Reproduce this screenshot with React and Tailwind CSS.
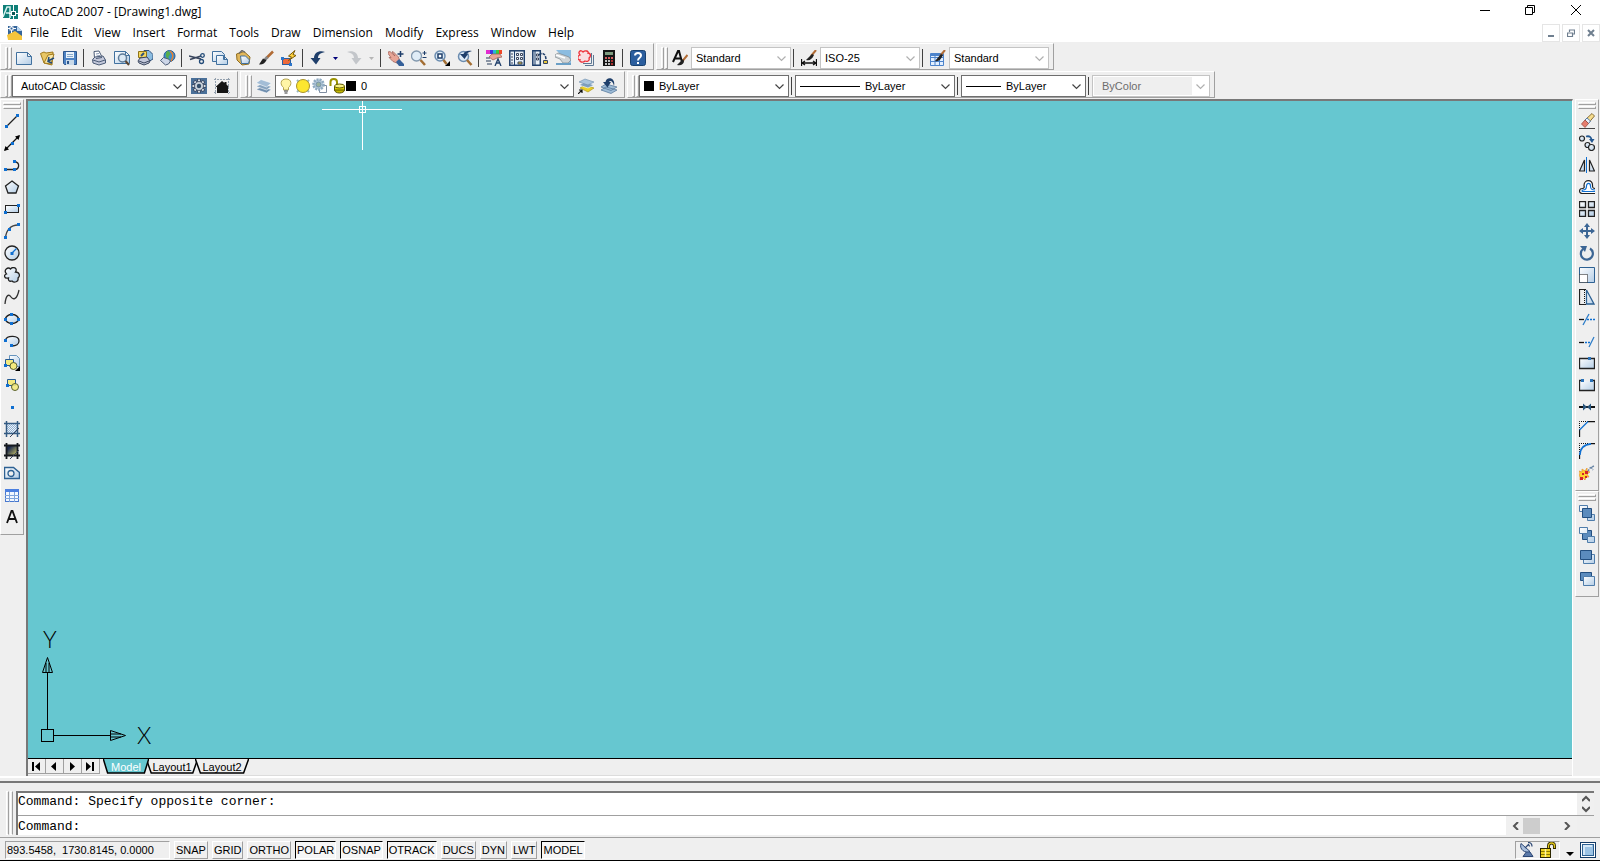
import clsx from "clsx";

const paper = "url(#paper)";
const navy = "#1f3f6b";

// 16x16 line art used by every toolbar
const glyphs = {
  app: (
    <>
      <rect x="0" y="1" width="15" height="14" fill="#0f7f78" />
      <path d="M0 13 4 3h3v11M3 9h4" fill="none" stroke="#d9f3f0" strokeWidth="1.500" />
      <path d="M10.500 1v6M10.500 12v4M6 9.500h3M13 9.500h3M0 14.500h7" stroke="#fff" />
      <rect x="8.500" y="7.500" width="4" height="4" fill="#0b5854" stroke="#fff" />
    </>
  ),
  dwg: (
    <>
      <path d="M1 1h9l5 5v9H1z" fill="#35659a" />
      <path d="M10 1v5h5" fill="#bcd7ef" />
      <path d="M0 10l8-4 7 5v4H1z" fill="#f5c53c" />
      <path d="M4.500 0v8M1 3.500h8" stroke="#fff" />
      <rect x="3" y="2" width="3" height="3" fill="#35659a" stroke="#fff" />
    </>
  ),
  new: <path d="M.5 2.500h11l4 4v8H.5zM11.500 2.500v4h4" fill={paper} stroke="#41719f" />,
  open: (
    <>
      <path d="M1.500 3.500 5 2l2 1 7-1-1 13-8-2z" fill="#e9c765" stroke="#a17a1c" />
      <path d="M5 13 9 5l6-1-3 10z" fill="#f8e6a5" stroke="#a17a1c" />
      <path d="M15 8 9 11m1-4-1 4.500 4 1.500" fill="none" stroke="#234b78" strokeWidth="1.500" />
    </>
  ),
  save: (
    <>
      <path d="M1.500 1.500h13v13h-12l-1-1z" fill="#4d82c3" stroke="#2d568c" />
      <rect x="4" y="2" width="8" height="6" fill="#e9f2fa" />
      <path d="M5 4.500h6M5 6.500h6" stroke="#88aacb" />
      <rect x="4" y="10" width="8" height="5" fill="#c9d9e8" />
      <rect x="5" y="11" width="2" height="3" fill="#2d568c" />
    </>
  ),
  print: (
    <>
      <path d="M3.500 8 3 1.500l5-.5 3 6" fill="#fff" stroke="#4b5b76" />
      <path d="m5 4 3-.5M5.500 6 9 5.500" stroke="#8898b4" />
      <path d="M1.500 9.500 4 7l8-1 2.500 4v3L8 15l-6-2z" fill="#c3c8da" stroke="#4b5b76" />
      <path d="m2 10 6 2 6-2M5 8.500l6-1" fill="none" stroke="#4b5b76" />
    </>
  ),
  preview: (
    <>
      <path d="M.5 1.500h11l4 4v8H.5zM11.500 1.500v4h4" fill={paper} stroke="#41719f" />
      <circle cx="8.500" cy="8" r="4" fill="#dbe9f5" stroke="#5e7c99" strokeWidth="1.500" />
      <path d="m11.500 11 3.500 4" stroke="#5c4530" strokeWidth="2" />
    </>
  ),
  publish: (
    <>
      <path d="M7 .5h5l4 4V9l-5 3z" fill="#8cbce0" stroke="#31527c" />
      <path d="M1.500 1.500h8v6h-8z" fill="#f5d75b" stroke="#8e7318" />
      <path d="m4 6 3-3" stroke="#31527c" strokeWidth="2" />
      <path d="M1 11 3 8l7-1 3 4-1 2-5 2-5-2z" fill="#c3c8da" stroke="#39455d" />
      <path d="m2 11 5 2 5-2" fill="none" stroke="#39455d" />
    </>
  ),
  web: (
    <>
      <circle cx="9.500" cy="6" r="5.500" fill="#3c8fd0" stroke="#265c95" />
      <path d="M7 1c3 0 4 3 2 5s2 3 0 5C7 8 4 6 7 1z" fill="#59ad4a" />
      <path d="M10 1c3 2 4 6 1 10" fill="none" stroke="#e7802e" strokeWidth="1.500" />
      <path d="m.5 10.500 3-3 5 1.500 2 2-2 3-3 1z" fill="#cdd6e8" stroke="#4b5b76" />
    </>
  ),
  cut: (
    <>
      <path d="M0 6 12 9M1 9.500 12 6" stroke="#39455d" strokeWidth="1.500" />
      <circle cx="13.500" cy="5.500" r="1.800" fill="none" stroke="#234b78" strokeWidth="1.300" />
      <circle cx="12.500" cy="11.500" r="2" fill="none" stroke="#234b78" strokeWidth="1.300" />
    </>
  ),
  copy: (
    <>
      <path d="M.5 1.500h9l3 3v7H.5z" fill={paper} stroke="#41719f" />
      <path d="M4.500 5.500h7l4 4v5h-11zM11.500 5.500v4h4" fill={paper} stroke="#41719f" />
    </>
  ),
  paste: (
    <>
      <path d="M1.500 4 9 1.500l6 5.500-1 7-7 1-5-5z" fill="#e1b75b" stroke="#8f6d20" />
      <path d="M4 3.500 7 .5l3 2" fill="none" stroke="#6d6d6d" strokeWidth="1.500" />
      <path d="m5.500 6 5 0 4 4-1 3.500-7 0z" fill={paper} stroke="#41719f" />
    </>
  ),
  brush: (
    <>
      <path d="M15 1.500 8.500 8" stroke="#b16b34" strokeWidth="2.500" />
      <path d="M9.500 7 7 9.500" stroke="#888" strokeWidth="3" />
      <path d="M8.500 10 5 8.500 1 14.500c3 .5 6-1 7.500-4.500z" fill="#222" />
    </>
  ),
  blockEdit: (
    <>
      <rect x="1.500" y="8.500" width="8" height="6" fill="#ee6a3b" stroke="#2b5fa0" />
      <path d="M0 7h3v3H0zM8 13h3v3H8z" fill="#2b74c9" />
      <path d="M14 .5 7.500 6l3 1L7.500 10.500 15 5.500l-3-1z" fill="#ffd23d" stroke="#7a5a08" />
    </>
  ),
  undo: (
    <path d="M15 2C9 0 4 3 4 8H.5L6 14.500 10.500 8H8c0-3 2-5 7-6z" fill={navy} />
  ),
  redo: <path d="M1 2c6-2 11 1 11 6h3.500L10 14.500 5.500 8H8c0-3-2-5-7-6z" fill="#c3c6ca" />,
  pan: (
    <>
      <path d="M0 2l2-.5L7 6 4 2l1-.5 5 5 2 4-2 3-5-2-4-4 2 0-3-4z" fill="#e8a597" stroke="#9a5a52" strokeWidth=".7" />
      <path d="m8 12 3-3 5 5v2h-5z" fill="#36619a" />
      <path d="M12.500 1v6M9.500 4h6" stroke={navy} strokeWidth="1.500" />
    </>
  ),
  zoom: (
    <>
      <circle cx="5.500" cy="6" r="5" fill="#dfecf7" stroke="#8298ae" strokeWidth="1.300" />
      <path d="m9.500 10 4.500 5" stroke="#a36e33" strokeWidth="2.500" />
      <path d="M13.500 1v4M11.500 3h4M11.500 7.500h4" stroke={navy} />
    </>
  ),
  zoomWindow: (
    <>
      <circle cx="6" cy="6" r="5" fill="#dfecf7" stroke="#6c8db0" strokeWidth="1.500" />
      <rect x="4" y="4" width="4" height="4" fill="#fff" stroke={navy} strokeWidth="1.500" />
      <path d="m9.500 10 3 4" stroke="#a36e33" strokeWidth="2.500" />
      <path d="M16 11v5h-5z" />
    </>
  ),
  zoomPrev: (
    <>
      <circle cx="6.500" cy="6.500" r="5" fill="#dfecf7" stroke="#6c8db0" strokeWidth="1.500" />
      <path d="m10 10 4.500 5" stroke="#a36e33" strokeWidth="2.500" />
      <path d="M15 1C10 0 7 2 6.500 4H3l4.500 5L11 4H9.500C10 3 12 2 15 1z" fill={navy} />
    </>
  ),
  props: (
    <>
      <path d="M0 0h4v4H0z" fill="#e22bd0" />
      <path d="M4 0h3v4H4z" fill="#4037e0" />
      <path d="M7 0h3v4H7z" fill="#28b7d8" />
      <path d="M10 0h3v4h-3z" fill="#3ccc3c" />
      <path d="M13 0h3v4h-3z" fill="#ee4728" />
      <path d="m3 7 3-3 8 0 2 3-5 1-4 2z" fill="#e8a597" stroke="#94564e" strokeWidth=".7" />
      <path d="M0 8h4m-4 3h5m-4 3h5" stroke="#68778c" strokeWidth="1.500" />
      <path d="m9 16 3-7 3 7m-5-3h4" fill="none" stroke={navy} strokeWidth="1.300" />
    </>
  ),
  center: (
    <>
      <rect x=".8" y=".8" width="14.500" height="14.500" fill="#e8f0f7" stroke={navy} strokeWidth="1.500" />
      <path d="M5.500 1v14" stroke={navy} />
      <path d="M2 4h2M2 7h2M2 10h2M2 13h2" stroke="#39455d" />
      <path d="M7.500 3.500h2v2h-2zM11.500 3.500h2v2h-2zM7.500 7.500h2v2h-2zM11.500 7.500h2v2h-2z" fill="#fff" stroke="#39455d" />
      <path d="M9 12h4v2H9z" fill="#e6c63a" stroke="#39455d" />
    </>
  ),
  palettes: (
    <>
      <path d="M.8.8h7.500v14.500H.8z" fill="#e8f0f7" stroke={navy} strokeWidth="1.500" />
      <path d="M3 1v14" stroke={navy} />
      <path d="M4.500 4h2v2h-2zM4.500 8h2v2h-2z" fill="#fff" stroke="#39455d" />
      <path d="M7 5c4-4 7 0 7 5" fill="none" stroke={navy} strokeWidth="1.500" strokeDasharray="3 1" />
      <path d="M11.500 10.500h4v3h-4z" fill="#e6c63a" stroke="#39455d" />
    </>
  ),
  sheets: (
    <>
      <path d="M1 0h15v15z" fill="#8bbce0" />
      <path d="m0 5 3-2 11 4 2 3-3 3-5 0-3-4-5-2z" fill="#cfd4d7" stroke="#7c868c" strokeWidth=".7" />
      <path d="m1 5 9 3" stroke="#fff" strokeWidth="1.500" />
      <path d="M1 13h15v2H1z" fill="#6a9fc6" />
    </>
  ),
  markup: (
    <>
      <path d="M5 13.500h8.500V3M7 15.500h8.500V5" fill="none" stroke="#5d7691" />
      <rect x="2" y="2" width="10" height="10" fill="#f4e9ec" />
      <path d="M2 5C-1 2 3-1 5 2c2-2 6-1 5 1 3 0 3 4 1 5 1 3-2 4-4 3-2 2-6 1-5-1-3 0-3-4 0-5z" fill="#f8dfe2" stroke="#ee2f38" strokeWidth="1.300" />
    </>
  ),
  calc: (
    <>
      <rect x="2" y="0" width="12" height="16" fill="#161616" />
      <rect x="4" y="2" width="8" height="3" fill="#7f9c7f" />
      <path d="M4 8h2M7 8h2M10 8h2M4 11h2M7 11h2M4 14h2M7 14h2" stroke="#fff" strokeWidth="1.500" />
      <path d="M4 8h8M10 11h2M10 14h2" stroke="#dc3a3a" strokeWidth="1.500" strokeDasharray="2 1" />
    </>
  ),
  help: (
    <>
      <rect x=".5" y=".5" width="15" height="15" rx="2" fill="#2b5e9e" stroke="#17406f" />
      <path d="M5 5.500C5 2 11 2 11 5.500 11 8 8 7.500 8 10.500M8 12v2" fill="none" stroke="#fff" strokeWidth="2" />
    </>
  ),
  textStyle: (
    <>
      <path d="M1 12 6 1h1l3 11M3 8.500h6" fill="none" stroke="#111" strokeWidth="2" />
      <path d="m15.500 5-5 6" stroke="#b16b34" strokeWidth="2" />
      <path d="m11 9-6 6c4 1 7-1 7-4z" fill="#222" />
    </>
  ),
  dimStyle: (
    <>
      <path d="M.5 9v7M15.500 9v7M1 13h14M4 11l-3 2 3 2M12 11l3 2-3 2" fill="none" stroke="#111" strokeWidth="1.300" />
      <path d="m15 0-5 6" stroke="#b16b34" strokeWidth="2" />
      <path d="m11 4-6 6c4 1 6-1 8-5z" fill="#222" />
    </>
  ),
  tableStyle: (
    <>
      <path d="M.5 3.500h13v12H.5zM.5 7.500h13M.5 11.500h13M5 4v11M9.500 4v11" fill="#e2efff" stroke="#4c83cb" />
      <path d="M1 4h12v2H1z" fill="#4c83cb" />
      <path d="m15 0-5 6" stroke="#b16b34" strokeWidth="2" />
      <path d="m11 4-6 7c4 1 6-2 8-6z" fill="#222" />
    </>
  ),
  gear: (
    <>
      <path d="M0 0h16v16H0z" fill="#4a7099" />
      <path d="M8 1v14M1 8h14M3 3l10 10M13 3 3 13" stroke="#39455d" strokeWidth="3.600" />
      <path d="M8 1.500v13M1.500 8h13M3.500 3.500l9 9M12.500 3.500l-9 9" stroke="#d6dee6" strokeWidth="2" />
      <circle cx="8" cy="8" r="4.500" fill="#c9d2db" stroke="#39455d" strokeWidth=".8" />
      <circle cx="8" cy="8" r="2.200" fill="#344e6a" />
    </>
  ),
  home: (
    <>
      <path d="M1.500 0v16M14.500 0v16M0 1.500h16M0 14.500h16" stroke="#93a0ae" strokeDasharray="2 1" />
      <path d="M8 3 1.500 9H3v6h11V9h1L12.500 6.500V4h-2v1z" fill="#151515" />
    </>
  ),
  layers: (
    <>
      <path d="m0 11.500 5-2.500 10.500 2.500-5 3.500z" fill="#6f8eae" stroke="#fff" strokeWidth=".6" />
      <path d="m0 8.500 5-2.500 10.500 2.500-5 3.500z" fill="#86a3bf" stroke="#fff" strokeWidth=".6" />
      <path d="m0 5 5-3.500L15.500 5l-5 4z" fill="#a3bdd6" stroke="#fff" strokeWidth=".6" />
    </>
  ),
  layerCurrent: (
    <>
      <path d="m2 10 5-3 9 3-6 4z" fill="#e9cf28" stroke="#a58b0c" strokeWidth=".6" />
      <path d="m1 7 6-3 9 3-6 3z" fill="#7f9fbe" stroke="#fff" strokeWidth=".6" />
      <path d="m1 4 6-3 9 3-6 3z" fill="#a8c4dd" stroke="#6d8dac" strokeWidth=".6" />
      <path d="m0 16 4-4M1 12h3v3" fill="none" stroke="#111" strokeWidth="1.200" />
    </>
  ),
  layerPrev: (
    <>
      <path d="m0 12 5-3 11 3-6 3.500zM0 9l5-3 11 3-6 3.500z" fill="#9dbbd6" stroke="#4f7196" strokeWidth=".7" />
      <path d="M13 8c2-9-8-10-8.500-4H2l4.500 5.500L10 4H8c1-2 4-1 5 4z" fill={navy} />
    </>
  ),
  bulb: (
    <>
      <path d="M8 1c-6 0-6 6-2.500 8.500V12h5V9.500C14 7 14 1 8 1z" fill="#fff5a6" stroke="#b5a550" />
      <path d="M6 13h4M6.500 15h3" stroke="#777" strokeWidth="1.500" />
    </>
  ),
  sun: (
    <>
      <path d="M2 2l2 2M14 2l-2 2M2 14l2-2M14 14l-2-2" stroke="#9bb9bd" strokeWidth="2" />
      <circle cx="8" cy="8" r="6.500" fill="#fce62f" stroke="#a8922a" />
    </>
  ),
  freeze: (
    <>
      <path d="M7.500 7.500h7v7h-7z" fill="#fff" stroke="#7f8da0" />
      <circle cx="6.500" cy="6.500" r="5" fill="#b5cadb" stroke="#8eaac1" strokeDasharray="2 1" strokeWidth="2.500" />
      <circle cx="6.500" cy="6.500" r="2.500" fill="#9ab39f" stroke="#7493ad" />
    </>
  ),
  lock: (
    <>
      <path d="M1.500 8V4C1.500 0 8 0 8 4v3" fill="none" stroke="#9c9300" strokeWidth="2" />
      <ellipse cx="10.500" cy="12" rx="5" ry="3" fill="#c5b900" stroke="#5d5700" />
      <path d="M5.500 8v4h10V8" fill="#e1d500" stroke="#5d5700" />
      <ellipse cx="10.500" cy="8" rx="5" ry="2" fill="#f6f083" stroke="#5d5700" />
    </>
  ),
  line: (
    <>
      <path d="M2 14 14 2" stroke="#222" strokeWidth="1.300" />
      <path d="M1 12h3v3H1zM12 1h3v3h-3z" fill="#0f6fd1" />
    </>
  ),
  xline: (
    <>
      <path d="M1 15 15 1" stroke="#111" strokeWidth="1.300" />
      <path d="m0 16 1.500-5L5 14.500zM16 0l-1.500 5L11 1.500z" />
      <path d="M7 7h3v3H7z" fill="#0f6fd1" />
    </>
  ),
  pline: (
    <>
      <path d="M1 12.500h9.500M10.500 12.500c5 0 6-7 0-8" fill="none" stroke="#222" strokeWidth="1.300" />
      <path d="M0 11h3v3H0zM9 11h3v3H9zM9 3h3v3H9z" fill="#0f6fd1" />
    </>
  ),
  polygon: <path d="m8 2 6.500 5-2.500 7H4L1.500 7z" fill={paper} stroke="#222" strokeWidth="1.300" />,
  rect: (
    <>
      <rect x="1.500" y="4.500" width="13" height="7" fill={paper} stroke="#222" />
      <path d="M0 10h3v3H0zM13 3h3v3h-3z" fill="#0f6fd1" />
    </>
  ),
  arc: (
    <>
      <path d="M1.500 15C2 7 7 2 14 2" fill="none" stroke="#444" strokeWidth="1.300" />
      <path d="M0 13h3v3H0zM4 5h3v3H4zM13 0h3v3h-3z" fill="#0f6fd1" />
    </>
  ),
  circle: (
    <>
      <circle cx="8" cy="8" r="7" fill={paper} stroke="#222" strokeWidth="1.300" />
      <path d="m8 8 4.500-4.500" stroke="#0f6fd1" strokeWidth="1.300" />
      <path d="M6.500 7h3v3h-3z" fill="#0f6fd1" />
    </>
  ),
  cloud: (
    <path d="M2.500 7C-1 3 4-.500 6.500 2 9-1 14 1 11.500 5c4 0 5 4 2.500 6 1 4-4 5-6 3-3 1-4-1-3.500-3C0 12-.500 8 2.500 7z" fill={paper} stroke="#222" strokeWidth="1.300" />
  ),
  spline: <path d="M1 15C2 5 5 5 7 8s6 3 8-7" fill="none" stroke="#333" strokeWidth="1.300" />,
  ellipse: (
    <>
      <ellipse cx="8" cy="8" rx="6.500" ry="4.500" fill={paper} stroke="#222" strokeWidth="1.500" />
      <path d="M0 7h3v3H0zM13 7h3v3h-3zM6 2h3v3H6zM6 11h3v3H6z" fill="#0f6fd1" />
    </>
  ),
  ellipseArc: (
    <>
      <path d="M1.500 7C3 2 15 2 15 8c0 3-3 5-7 5" fill={paper} stroke="#222" strokeWidth="1.300" />
      <path d="M0 6h3v3H0zM6 11h3v3H6z" fill="#0f6fd1" />
    </>
  ),
  insert: (
    <>
      <path d="M5.500.5h7l3 3v8h-10z" fill={paper} stroke="#6794bd" />
      <path d="M1.500 4.500h8v6h-8z" fill="#f3ea7e" stroke="#245a94" />
      <circle cx="9.500" cy="11" r="3.500" fill="#f3ea7e" stroke="#59612b" />
      <path d="M0 9h3v3H0z" fill="#0f6fd1" />
      <path d="M16 11v5h-5z" />
    </>
  ),
  block: (
    <>
      <path d="M3.500 2.500h8v6h-8z" fill="#f3ea7e" stroke="#245a94" />
      <circle cx="11" cy="10" r="3.500" fill="#f3ea7e" fillOpacity=".9" stroke="#59612b" />
      <path d="M2 7h3v3H2z" fill="#0f6fd1" />
    </>
  ),
  point: <path d="M7 7h3v3H7z" fill="#0f6fd1" />,
  hatch: (
    <>
      <path d="M3 3h10v10H3z" fill="#eaf2fa" />
      <path d="m3 3 10 10M3 7l6 6M7 3l6 6M3 11l2 2M11 3l2 2M3 5l8 8M5 3l8 8M3 9l4 4M9 3l4 4" stroke="#6e96c0" strokeWidth=".7" />
      <path d="M0 2.500h16M0 12.500h16M2.500 0v16M13.500 0v16" stroke="#345b83" strokeWidth="1.500" />
      <path d="m15 7-9 9" stroke="#39455d" />
    </>
  ),
  gradient: (
    <>
      <path d="M3 3h10v10H3z" fill="url(#dusk)" />
      <path d="M0 2.500h16M0 12.500h16M2.500 0v16M13.500 0v16" stroke="#15191f" strokeWidth="1.800" />
      <path d="m15 7-9 9" stroke="#39455d" />
    </>
  ),
  region: (
    <>
      <path d="M.5 2.500h9l6 5v6H.5z" fill={paper} stroke="#2d6193" strokeWidth="1.500" />
      <circle cx="7" cy="8.500" r="3" fill="#efefef" stroke="#2d6193" strokeWidth="1.300" />
    </>
  ),
  table: (
    <>
      <rect x="1.500" y="2.500" width="13" height="12" fill="#f3f8ff" stroke="#4979cf" />
      <path d="M1 2h14v3H1z" fill="#4b7fe0" />
      <path d="M1 8.500h14M1 11.500h14M5.500 5v10M10.500 5v10" stroke="#7ea4dc" />
    </>
  ),
  mtext: (
    <path d="M3 14 7.500 2h1L13 14M4.500 10h7" fill="none" stroke="#111" strokeWidth="1.800" />
  ),
  erase: (
    <>
      <path d="M0 15.500h16" stroke="#444" />
      <path d="M13 .5 15.500 3 9.500 10 6 7z" fill="#f5dc8e" stroke="#6d5016" strokeWidth=".8" />
      <path d="M8 5 11.500 8 9.500 10.500 6 7z" fill="#e9eef5" stroke="#3a6aa6" strokeWidth=".8" />
      <path d="M6 7 9.500 10.500 6 14.500 2.500 11z" fill="#e67d6d" stroke="#9c4a3f" strokeWidth=".8" />
    </>
  ),
  copyObj: (
    <>
      <circle cx="3" cy="3.500" r="2.500" fill={paper} stroke="#222" strokeWidth="1.200" />
      <circle cx="8.500" cy="10" r="2.500" fill={paper} stroke="#222" strokeWidth="1.200" />
      <circle cx="12.500" cy="12.500" r="3" fill={paper} stroke="#222" strokeWidth="1.200" />
      <path d="M7 1.500c4-1 5 1 5.500 3" fill="none" stroke="#235790" strokeWidth="1.800" />
      <path d="M10 4h5.500L13 8z" fill="#235790" />
    </>
  ),
  mirror: (
    <>
      <path d="M5.500 3v11h-5z" fill={paper} stroke="#222" strokeWidth="1.200" />
      <path d="M10.500 3v11h5z" fill={paper} stroke="#222" strokeWidth="1.200" />
      <path d="M7.500 0v16" stroke="#0f6fd1" />
    </>
  ),
  offset: (
    <>
      <path d="M16 14.500H3.500c-4 0-4-5 0-5 1.500 0 2-1 1.500-3C5 0 14 0 13.500 6.500 13.500 9 14 9.500 16 9.500" fill="#fff" stroke="#222" strokeWidth="1.200" />
      <path d="M16 12.500H4c-1.500 0-1-1.500 0-1.500 2.500 0 3.500-1.500 3.500-4C7.500 3.500 11.500 3.500 11.500 7c0 3 1 4 4.500 4" fill="none" stroke="#0f6fd1" strokeWidth="1.200" />
    </>
  ),
  array: (
    <path d="M.5.500h6v6h-6zM9.500.500h6v6h-6zM.5 9.500h6v6h-6zM9.500 9.500h6v6h-6z" fill={paper} stroke="#222" strokeWidth="1.300" />
  ),
  move: (
    <>
      <path d="M8 2v12M2 8h12" stroke="#3c6695" strokeWidth="2" />
      <path d="m8 0 3 4H5zM8 16l3-4H5zM0 8l4-3v6zM16 8l-4-3v6z" fill="#3c6695" />
    </>
  ),
  rotate: (
    <>
      <path d="M11 3.500A6 6 0 1 1 4 4" fill="none" stroke="#3c6695" strokeWidth="2.200" />
      <path d="M1 1h7l-2 6z" fill="#3c6695" />
    </>
  ),
  scale: (
    <>
      <path d="M.5.500h15v15H.5z" fill={paper} stroke="#2d6193" />
      <path d="M.5 7.500h8v8h-8z" fill="#fff" stroke="#111" strokeDasharray="1 1" />
    </>
  ),
  stretch: (
    <>
      <path d="M7.500 1 15 15H7.500z" fill={paper} stroke="#2d6193" strokeWidth="1.300" />
      <path d="M7 .5H.5v15H7" fill="none" stroke="#222" strokeWidth="1.200" />
      <path d="M5.500 1v14" stroke="#111" strokeDasharray="1 1" />
    </>
  ),
  trim: (
    <>
      <path d="M0 8.500h5" stroke="#111" strokeWidth="1.300" />
      <path d="M8 8.500h8" stroke="#0f6fd1" strokeWidth="1.300" strokeDasharray="2 1" />
      <path d="m4 14 6-11" stroke="#2c7cc8" strokeWidth="1.300" />
    </>
  ),
  extend: (
    <>
      <path d="M0 9.500h5" stroke="#111" strokeWidth="1.300" />
      <path d="M6 9.500h6" stroke="#0f6fd1" strokeWidth="1.300" strokeDasharray="2 1" />
      <path d="m10 14 5-10" stroke="#2c7cc8" strokeWidth="1.300" />
    </>
  ),
  breakPoint: (
    <>
      <path d="M.5 3.500h15v10H.5z" fill={paper} stroke="#222" strokeWidth="1.300" />
      <path d="M9 2h3v3H9z" fill="#2a72b8" />
    </>
  ),
  breakGap: (
    <>
      <path d="M1 4h14v10H1z" fill={paper} />
      <path d="M3 3.500H.5v10h15v-10H13" fill="none" stroke="#222" strokeWidth="1.300" />
      <path d="M2 2h3v3H2zM11 2h3v3h-3z" fill="#2a72b8" />
    </>
  ),
  join: (
    <>
      <path d="M0 8h16" stroke="#111" strokeWidth="2" />
      <path d="M4 4.500 8 8l-4 3.500zM12 4.500 8 8l4 3.500z" fill="#28567e" />
    </>
  ),
  chamfer: (
    <>
      <path d="M.5 9V.5H9" fill="none" stroke="#111" strokeDasharray="1 1" />
      <path d="M.5 9v7M9 .5h7" stroke="#111" strokeWidth="1.300" />
      <path d="m.5 9 8.500-8.500" stroke="#0f6fd1" strokeWidth="1.300" />
    </>
  ),
  fillet: (
    <>
      <path d="M.5 9V.5H9" fill="none" stroke="#111" strokeDasharray="1 1" />
      <path d="M.5 11v5M11 .5h5" stroke="#111" strokeWidth="1.300" />
      <path d="M.8 12C1 5 5 1.500 12 .8" fill="none" stroke="#0f6fd1" strokeWidth="1.800" />
    </>
  ),
  explode: (
    <>
      <path d="m0 6 3 1 0-3 3 2 2-3 0 3 3 1-3 2 2 3-3 0-1 3-2-2-3 2 0-3-1-2 1-2z" fill="#ffd12e" stroke="#e5902b" strokeWidth=".7" />
      <path d="M1 12h3v3H1zM6 6h3v3H6zM3 8h2v2H3zM6 11h2v2H6z" fill="#d3222a" />
      <path d="m9 6 2-3 4-2M12 2l2 3" fill="none" stroke="#6a86a6" strokeWidth="1.500" strokeDasharray="2 1" />
    </>
  ),
  orderFront: (
    <>
      <path d="M.5.500h8v6h-8zM8.500 9.500h7v6h-7z" fill={paper} stroke="#4f7dab" />
      <path d="M3.500 3.500h9v9h-9z" fill="#5b8bbd" stroke="#234f80" />
    </>
  ),
  orderBack: (
    <>
      <path d="M3.500 3.500h9v9h-9z" fill="#5b8bbd" stroke="#234f80" />
      <path d="M.5.500h8v6h-8zM8.500 9.500h7v6h-7z" fill={paper} stroke="#4f7dab" />
    </>
  ),
  orderAbove: (
    <>
      <path d="M4.500 5.500h11v9h-11z" fill={paper} stroke="#4f7dab" />
      <path d="M1.500 1.500h11v9h-11z" fill="#5b8bbd" stroke="#234f80" />
    </>
  ),
  orderUnder: (
    <>
      <path d="M1.500 1.500h11v8h-11z" fill="#5b8bbd" stroke="#234f80" />
      <path d="M4.500 5.500h11v9h-11z" fill={paper} stroke="#4f7dab" />
    </>
  ),
  dish: (
    <>
      <path d="m8 9-4 5.500h10L11 10z" fill="#5b79a8" stroke="#2c4775" />
      <path d="M2 1.500c-2 6 4 10 9 8z" fill="#a9bfdd" stroke="#2c4775" />
      <path d="m6 6 4-4M9 .5c3 0 4 2 4 4M9 3c1 0 1.500.5 1.500 1.500" fill="none" stroke="#2c4775" strokeWidth="1.200" />
    </>
  ),
  padlock: (
    <>
      <path d="M8.500 7V4c0-4 6-4 6 0v3" fill="none" stroke="#2c2600" strokeWidth="3" />
      <path d="M8.500 7V4c0-4 6-4 6 0v2" fill="none" stroke="#e2c71c" strokeWidth="1.300" />
      <rect x=".5" y="6.500" width="10" height="9" fill="#efd321" stroke="#2c2600" />
      <path d="M1 9.500h9M1 12.500h9" stroke="#8b7900" />
      <path d="M5.500 7v8" stroke="#fff6a2" strokeWidth="1.500" />
    </>
  ),
};

const standardTools = [
  "new", "open", "save", "|",
  "print", "preview", "publish", "web", "|",
  "cut", "copy", "paste", "brush", "blockEdit", "|",
  "undo", "v", "redo", "vOff", "|",
  "pan", "zoom", "zoomWindow", "zoomPrev", "|",
  "props", "center", "palettes", "sheets", "markup", "calc", "|",
  "help",
];

const drawTools = [
  "line", "xline", "pline", "polygon", "rect", "arc", "circle", "cloud", "spline", "ellipse",
  "ellipseArc", "insert", "block", "point", "hatch", "gradient", "region", "table", "mtext",
];

const modifyTools = [
  "erase", "copyObj", "mirror", "offset", "array", "move", "rotate", "scale", "stretch", "trim",
  "extend", "breakPoint", "breakGap", "join", "chamfer", "fillet", "explode",
];

const orderTools = ["orderFront", "orderBack", "orderAbove", "orderUnder"];

const menus = [
  "File", "Edit", "View", "Insert", "Format", "Tools",
  "Draw", "Dimension", "Modify", "Express", "Window", "Help",
];

const modes = [
  { label: "SNAP" },
  { label: "GRID" },
  { label: "ORTHO" },
  { label: "POLAR", on: true },
  { label: "OSNAP", on: true },
  { label: "OTRACK", on: true },
  { label: "DUCS" },
  { label: "DYN" },
  { label: "LWT" },
  { label: "MODEL", on: true },
];

function Icon({ name }) {
  return (
    <svg viewBox="0 0 16 16" className="size-4 shrink-0" aria-hidden="true">
      {glyphs[name]}
    </svg>
  );
}

function ToolButton({ name, tall }) {
  return (
    <button
      type="button"
      aria-label={name}
      className={clsx("flex h-[22px] shrink-0 items-center", tall ? "w-full justify-center" : "w-[23px] pl-1")}
    >
      <Icon name={name} />
    </button>
  );
}

function Divider() {
  return <div className="ml-[2px] mr-[3px] h-[18px] w-px shrink-0 bg-[#404040]" />;
}

function Grip({ flat }) {
  return (
    <div className={clsx("flex shrink-0 gap-px", flat ? "h-2 w-full flex-col px-[2px]" : "ml-1 h-[22px]")}>
      {[0, 1].map((i) => (
        <div
          key={i}
          className={clsx("border border-white border-b-[#a0a0a0] border-r-[#a0a0a0]", flat ? "h-[3px]" : "w-[3px]")}
        />
      ))}
    </div>
  );
}

function Toolbar({ children }) {
  return (
    <div className="flex h-[27px] shrink-0 items-center border border-white border-b-[#a0a0a0] border-r-[#a0a0a0] pr-1 pt-[3px]">
      <Grip />
      {children}
    </div>
  );
}

function Combo({ label, value, width, pad = "pl-1", soft, disabled, children }) {
  return (
    <label
      className={clsx(
        "relative flex h-[22px] shrink-0 items-center gap-[5px] border bg-white",
        soft || disabled ? "border-[#c4c4c4]" : "border-[#6e6e6e]",
        width,
        pad
      )}
    >
      {children}
      <select
        aria-label={label}
        disabled={disabled}
        className={clsx(
          "h-[18px] min-w-0 flex-1 appearance-none outline-none",
          disabled ? "mr-[17px] bg-[#efefef] pl-2 text-[#6d6d6d]" : "bg-transparent"
        )}
      >
        <option>{value}</option>
      </select>
      <svg viewBox="0 0 9 6" className="pointer-events-none absolute right-1 top-2 h-[6px] w-[9px]">
        <path d="m.5.500 4 4 4-4" fill="none" stroke={soft || disabled ? "#b0b0b0" : "#444"} strokeWidth="1.200" />
      </svg>
    </label>
  );
}

function SideBar({ tools }) {
  return (
    <div className="flex w-6 shrink-0 flex-col items-center border border-white border-b-[#a0a0a0] border-r-[#a0a0a0] pb-[6px] pt-[2px]">
      <Grip flat />
      {tools.map((name) => (
        <ToolButton key={name} name={name} tall />
      ))}
    </div>
  );
}

function TitleBar() {
  return (
    <header className="flex h-6 items-start bg-white font-['Open_Sans','Noto_Sans',sans-serif] text-[12px]">
      <div className="flex h-6 flex-1 items-center gap-1 pl-[3px]">
        <Icon name="app" />
        <h1>AutoCAD 2007 - [Drawing1.dwg]</h1>
      </div>
      <div className="flex h-5">
        <button type="button" aria-label="Minimize" className="flex w-[45px] items-center justify-center">
          <svg viewBox="0 0 10 10" className="size-[10px]"><path d="M0 5.500h10" stroke="#000" /></svg>
        </button>
        <button type="button" aria-label="Restore" className="flex w-[45px] items-center justify-center">
          <svg viewBox="0 0 10 10" className="size-[10px]">
            <path d="M.5 2.500h7v7h-7zM2.500 2.500v-2h7v7h-2" fill="none" stroke="#000" />
          </svg>
        </button>
        <button type="button" aria-label="Close" className="flex w-12 items-center justify-center">
          <svg viewBox="0 0 10 10" className="size-[10px]"><path d="m0 0 10 10M10 0 0 10" stroke="#000" /></svg>
        </button>
      </div>
    </header>
  );
}

function MenuBar() {
  const frame = "flex size-[18px] items-center justify-center border border-[#e5e5e5]";
  return (
    <nav className="flex h-[18px] items-center bg-white font-['Open_Sans','Noto_Sans',sans-serif] text-[12px] leading-4">
      <div className="flex w-6 pl-[7px]">
        <Icon name="dwg" />
      </div>
      <div className="flex flex-1">
        {menus.map((menu) => (
          <button type="button" key={menu} className="px-[6px]">
            {menu}
          </button>
        ))}
      </div>
      <div className="flex gap-[2px] text-[#6f7f8f]">
        <button type="button" aria-label="Minimize drawing" className={frame}>
          <svg viewBox="0 0 8 8" className="size-2"><path d="M1 7h6" stroke="currentColor" strokeWidth="2" /></svg>
        </button>
        <button type="button" aria-label="Restore drawing" className={frame}>
          <svg viewBox="0 0 8 8" className="size-2">
            <path d="M.5 4h5v3.500h-5zM2.500 3V1h5v4H6M0 4h6M2 1h6" fill="none" stroke="currentColor" strokeWidth="1.200" />
          </svg>
        </button>
        <button type="button" aria-label="Close drawing" className={frame}>
          <svg viewBox="0 0 8 8" className="size-2"><path d="m1 1 6 6M7 1 1 7" stroke="currentColor" strokeWidth="2" /></svg>
        </button>
      </div>
    </nav>
  );
}

function Ribbon() {
  return (
    <>
      <div className="mt-px flex gap-[2px]">
        <Toolbar>
          {standardTools.map((name, i) => {
            if (name === "|") return <Divider key={i} />;
            if (name === "v" || name === "vOff") {
              return (
                <button type="button" key={i} aria-label="History" className="flex w-[13px] justify-center">
                  <svg viewBox="0 0 5 3" className="h-[3px] w-[5px]">
                    <path d="M0 0h5L2.500 3z" fill={name === "v" ? "#00007a" : "#b5b5b5"} />
                  </svg>
                </button>
              );
            }
            return <ToolButton key={i} name={name} />;
          })}
        </Toolbar>
        <Toolbar>
          <ToolButton name="textStyle" />
          <Combo label="Text style" value="Standard" width="w-[100px]" soft />
          <Divider />
          <ToolButton name="dimStyle" />
          <Combo label="Dimension style" value="ISO-25" width="w-[100px]" soft />
          <Divider />
          <ToolButton name="tableStyle" />
          <Combo label="Table style" value="Standard" width="w-[100px]" soft />
        </Toolbar>
      </div>
      <div className="mt-px flex gap-[2px]">
        <Toolbar>
          <Combo label="Workspace" value="AutoCAD Classic" width="w-[175px]" pad="pl-2" />
          <ToolButton name="gear" />
          <ToolButton name="home" />
        </Toolbar>
        <Toolbar>
          <ToolButton name="layers" />
          <Combo label="Layer" value="0" width="w-[299px]" pad="pl-[2px]">
            <div className="flex gap-px">
              <Icon name="bulb" />
              <Icon name="sun" />
              <Icon name="freeze" />
              <Icon name="lock" />
              <div className="my-[3px] size-[10px] bg-black" />
            </div>
          </Combo>
          <ToolButton name="layerCurrent" />
          <ToolButton name="layerPrev" />
        </Toolbar>
        <Toolbar>
          <Combo label="Color" value="ByLayer" width="w-[150px]">
            <div className="size-[10px] bg-black" />
          </Combo>
          <Divider />
          <Combo label="Linetype" value="ByLayer" width="w-[160px]">
            <div className="h-px w-[60px] bg-black" />
          </Combo>
          <Divider />
          <Combo label="Lineweight" value="ByLayer" width="w-[125px]">
            <div className="h-px w-[35px] bg-black" />
          </Combo>
          <Divider />
          <Combo label="Plot style" value="ByColor" width="w-[118px]" pad="pl-px" disabled />
        </Toolbar>
      </div>
    </>
  );
}

function Crosshair() {
  return (
    <svg viewBox="0 0 81 49" className="absolute left-[294px] top-0 h-[49px] w-[81px]" fill="none" stroke="#fff">
      <path d="M0 8.500h38M43 8.500h37M40.500 0v6M40.500 11v38" />
      <rect x="37.500" y="5.500" width="6" height="6" />
      <path d="M38 8.500h5M40.500 6v5" />
    </svg>
  );
}

function UcsIcon() {
  return (
    <svg viewBox="0 -20 120 150" className="absolute bottom-0 left-[10px] h-[150px] w-[120px]" fill="none" stroke="#000">
      <rect x="3.500" y="101.500" width="12" height="12" />
      <path d="M9.500 101V44M16 107.500h56" />
      <path d="M9.500 29.500 4.500 44.500h10zM8 35v9M11 35v9" />
      <path d="M87.500 107.500 72.500 102.500v10zM73 106h10M73 109h10" />
      <g className="font-['Lato',sans-serif] text-[23px] font-light" fill="#000" stroke="none">
        <text x="5" y="20">Y</text>
        <text x="99" y="116">X</text>
      </g>
    </svg>
  );
}

function LayoutTab({ label, active, width }) {
  return (
    <button
      type="button"
      className={clsx("relative -ml-[3px] h-[15px] leading-[14px]", width, active ? "z-10 text-white" : "text-black")}
    >
      <svg viewBox="0 0 50 15" preserveAspectRatio="none" className="absolute inset-0 size-full">
        <path
          d="M0-1 5 14H45L50-1"
          fill={active ? "#66c7d0" : "#efefef"}
          stroke="#000"
          strokeWidth="1.500"
          vectorEffect="non-scaling-stroke"
        />
      </svg>
      <span className="relative">{label}</span>
    </button>
  );
}

function TabStrip() {
  const arrows = [
    { label: "First", d: "M1 0h2v9H1zM9 0v9L4 4.500z" },
    { label: "Previous", d: "M7 0v9L2 4.500z" },
    { label: "Next", d: "M3 0v9l5-4.500z" },
    { label: "Last", d: "M7 0h2v9H7zM1 0v9l5-4.500z" },
  ];
  return (
    <div className="flex h-[17px] items-start border-b border-[#dcdcdc]">
      {arrows.map((arrow) => (
        <button
          type="button"
          key={arrow.label}
          aria-label={arrow.label}
          className="flex h-[15px] w-[18px] items-center justify-center border-b border-r border-[#a0a0a0] pr-px"
        >
          <svg viewBox="0 0 10 9" className="h-[9px] w-[10px]"><path d={arrow.d} /></svg>
        </button>
      ))}
      <div className="ml-[6px] flex">
        <LayoutTab label="Model" active width="w-[46px]" />
        <LayoutTab label="Layout1" width="w-[52px]" />
        <LayoutTab label="Layout2" width="w-[54px]" />
      </div>
    </div>
  );
}

function Chevron({ d }) {
  return (
    <svg viewBox="0 0 8 8" className="size-2">
      <path d={d} fill="none" stroke="#555" strokeWidth="2" />
    </svg>
  );
}

function CommandWindow() {
  return (
    <section className="flex border-t-2 border-[#787878] pb-[2px] pr-[6px] pt-2">
      <div className="ml-[6px] mr-[3px] flex gap-px">
        <div className="w-[3px] border border-white border-r-[#a0a0a0]" />
        <div className="w-[3px] border border-white border-r-[#a0a0a0]" />
      </div>
      <div className="min-w-0 flex-1 border-l-2 border-t-2 border-[#787878] font-['Liberation_Mono',monospace] text-[13px]">
        <div className="flex h-[23px] border-b border-[#a0a0a0] bg-white">
          <p className="flex-1 leading-[17px]">Command: Specify opposite corner:</p>
          <div className="flex w-[17px] flex-col items-center justify-between bg-[#f0f0f0] py-[2px]">
            <button type="button" aria-label="Scroll up" className="leading-none"><Chevron d="m0 6 4-4 4 4" /></button>
            <button type="button" aria-label="Scroll down" className="leading-none"><Chevron d="m0 2 4 4 4-4" /></button>
          </div>
        </div>
        <div className="flex h-[19px]">
          <label htmlFor="command" className="bg-white leading-[21px]">Command:</label>
          <input id="command" className="min-w-0 flex-1 bg-white outline-none" />
          <div className="mr-[17px] flex w-[71px] items-center justify-between bg-[#f0f0f0] px-[6px]">
            <button type="button" aria-label="Scroll left"><Chevron d="M6 0 2 4l4 4" /></button>
            <div className="mr-5 h-4 w-[17px] bg-[#cdcdcd]" />
            <button type="button" aria-label="Scroll right"><Chevron d="m2 0 4 4-4 4" /></button>
          </div>
        </div>
      </div>
    </section>
  );
}

function StatusBar() {
  return (
    <footer className="flex h-6 items-center gap-1 border-b border-t border-b-black border-t-[#a0a0a0] pl-[5px] pr-1 pt-px">
      <output className="h-[18px] w-[165px] whitespace-pre border border-[#a0a0a0] border-b-white border-r-white pl-px leading-[17px]">
        893.5458,  1730.8145, 0.0000
      </output>
      {modes.map((mode) => (
        <button
          type="button"
          key={mode.label}
          aria-pressed={!!mode.on}
          className={clsx(
            "h-[18px] border px-px leading-4",
            mode.on
              ? "border-black border-b-white border-r-white bg-[#f6f6f6]"
              : "border-white border-b-[#a0a0a0] border-r-[#a0a0a0]"
          )}
        >
          {mode.label}
        </button>
      ))}
      <div className="ml-auto flex items-center gap-[6px]">
        <div className="flex h-[18px] items-center gap-[5px] border border-[#a0a0a0] border-b-white border-r-white px-[3px]">
          <Icon name="dish" />
          <Icon name="padlock" />
        </div>
        <button type="button" aria-label="Status bar menu" className="mt-2">
          <svg viewBox="0 0 8 4" className="h-1 w-2"><path d="M0 0h8L4 4z" /></svg>
        </button>
        <button type="button" aria-label="Clean screen">
          <svg viewBox="0 0 16 16" className="size-4">
            <rect x=".5" y=".5" width="15" height="15" fill="#fff" stroke="#123a66" />
            <rect x="2.500" y="2.500" width="11" height="11" fill="#9cc3e4" stroke="#2d6193" />
            <path d="M3 3h9v2H5v8H3z" fill="#d6e8f7" />
          </svg>
        </button>
      </div>
    </footer>
  );
}

export default function App() {
  return (
    <div className="flex min-h-screen flex-col bg-[#efefef] font-['Liberation_Sans',Arial,sans-serif] text-[11px] text-black">
      <svg className="absolute size-0" aria-hidden="true">
        <defs>
          <linearGradient id="paper" x1="0" y1="0" x2="1" y2="1">
            <stop offset="0" stopColor="#fff" />
            <stop offset="1" stopColor="#b3cde6" />
          </linearGradient>
          <linearGradient id="dusk" x1="0" y1="0" x2="1" y2="1">
            <stop offset="0.200" stopColor="#1b2a4e" />
            <stop offset="1" stopColor="#d8cf6a" />
          </linearGradient>
        </defs>
      </svg>
      <TitleBar />
      <MenuBar />
      <Ribbon />
      <main className="mt-px flex flex-1 items-stretch">
        <div>
          <SideBar tools={drawTools} />
        </div>
        <div className="mx-[2px] flex min-w-0 flex-1 flex-col border-l-2 border-r border-t-2 border-l-[#787878] border-r-white border-t-[#787878]">
          <div className="relative flex-1 cursor-crosshair overflow-hidden border-b border-black bg-[#66c7d0]">
            <Crosshair />
            <UcsIcon />
          </div>
          <TabStrip />
        </div>
        <div className="pr-px">
          <SideBar tools={modifyTools} />
          <SideBar tools={orderTools} />
        </div>
      </main>
      <div className="mb-[3px] h-[2px] bg-white" />
      <CommandWindow />
      <StatusBar />
    </div>
  );
}
